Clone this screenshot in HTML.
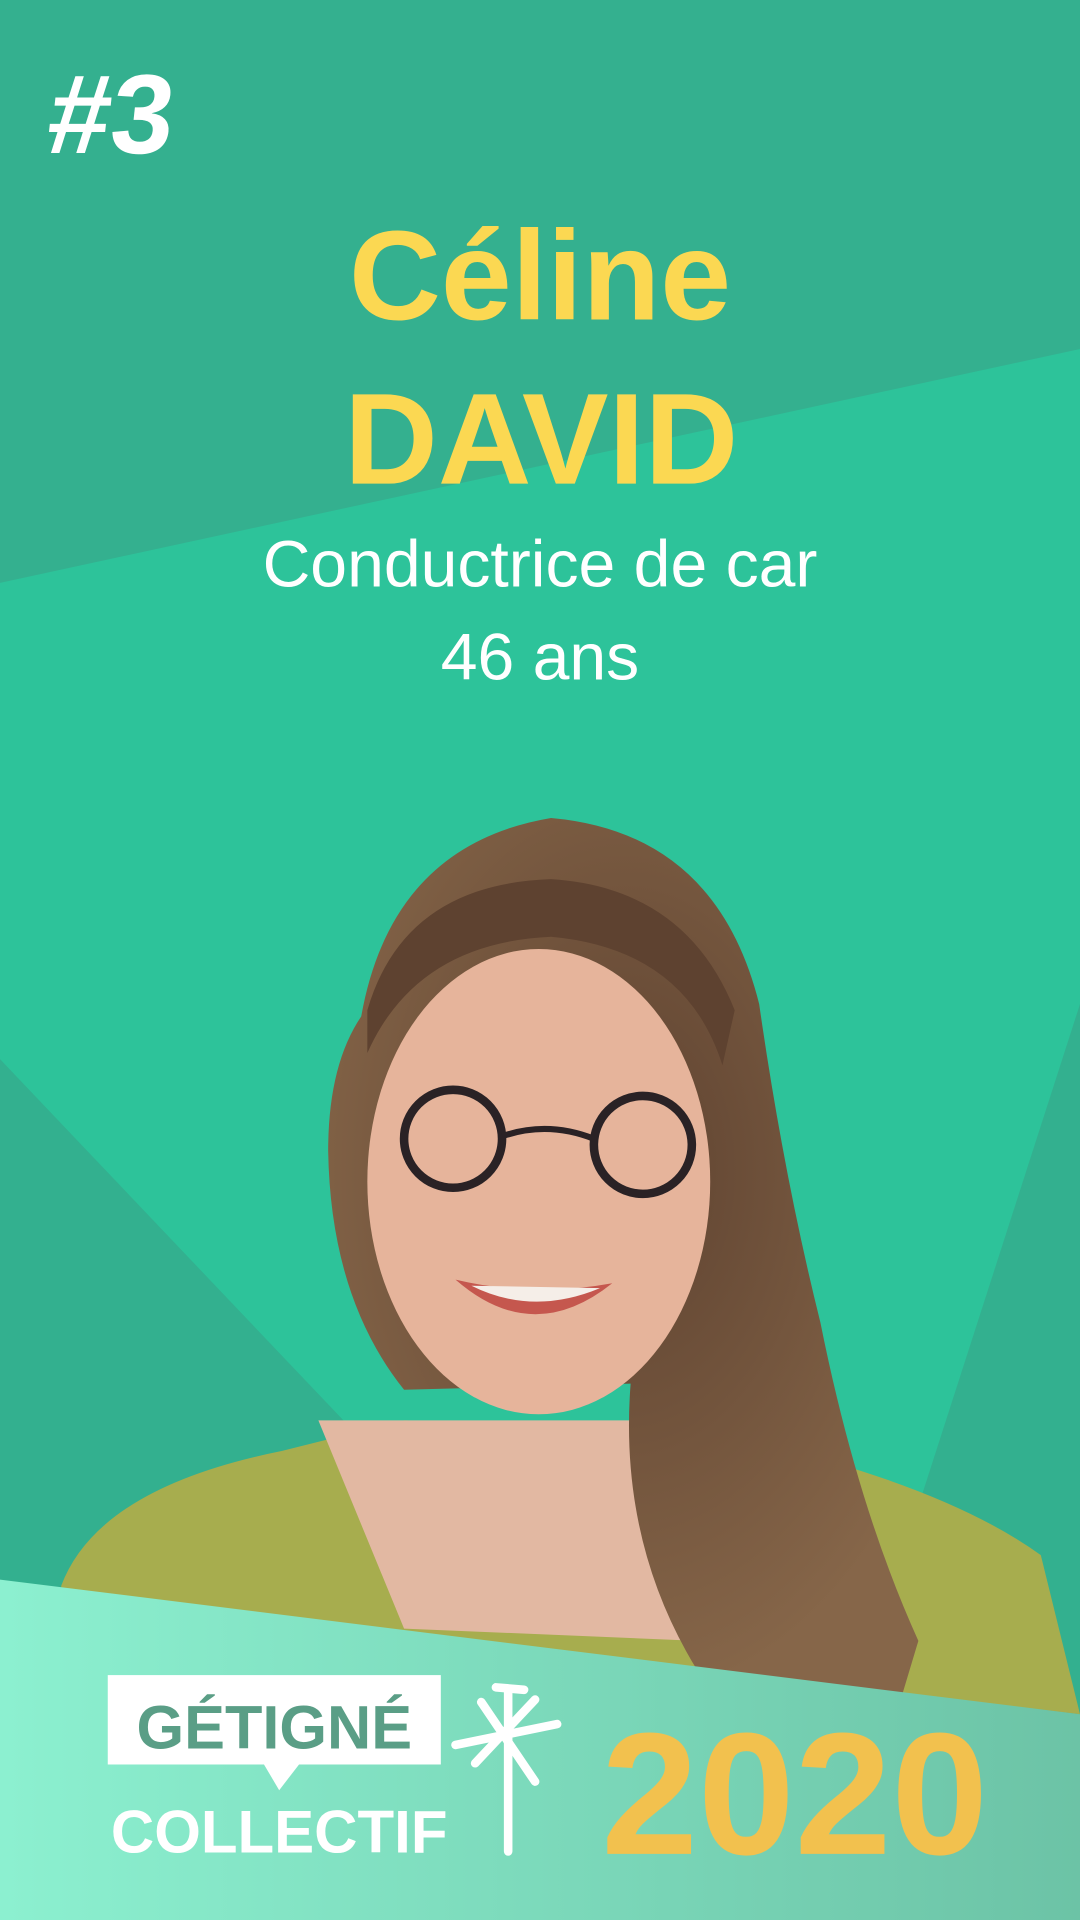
<!DOCTYPE html>
<html><head><meta charset="utf-8"><style>
html,body{margin:0;padding:0;width:1080px;height:1920px;overflow:hidden;background:#2dc39a}
svg{display:block}
</style></head><body>
<svg width="1080" height="1920" viewBox="0 0 882 1568" xmlns="http://www.w3.org/2000/svg">
<defs>
<linearGradient id="bg" x1="0" y1="0" x2="1" y2="0">
<stop offset="0" stop-color="#8cf0d0"/><stop offset="1" stop-color="#6cc3a6"/></linearGradient>
<radialGradient id="hair" cx="0.5" cy="0.4" r="0.6"><stop offset="0" stop-color="#5e4230"/><stop offset="1" stop-color="#866649"/></radialGradient>
</defs>
<rect width="882" height="1568" fill="#2dc39a"/>
<polygon points="0,0 882,0 882,285 0,476" fill="#34b08f"/>
<polygon points="0,865 290,1170 290,1310 0,1310" fill="#33b08f"/>
<polygon points="882,820 750,1230 750,1410 882,1410" fill="#33b08f"/>
<path d="M50,1295 Q80,1215 230,1185 L330,1160 L560,1165 Q760,1205 850,1270 L882,1400 L50,1300 Z" fill="#a7ad4e"/>
<path d="M260,1160 L540,1160 L570,1340 L330,1330 Z" fill="#e2b8a2"/>
<path d="M295,830 Q320,690 450,668 Q585,680 620,820 Q640,960 670,1080 Q700,1230 750,1340 L735,1390 L570,1365 Q505,1260 515,1130 L330,1135 Q270,1060 268,940 Q268,870 295,830 Z" fill="url(#hair)"/>
<ellipse cx="440" cy="965" rx="140" ry="190" fill="#e6b49b"/>
<path d="M300,860 Q340,770 450,765 Q560,775 590,870 L600,825 Q560,725 450,718 Q330,722 300,825 Z" fill="#5e4230"/>
<circle cx="370" cy="930" r="40" fill="none" stroke="#2a2225" stroke-width="7"/>
<circle cx="525" cy="935" r="40" fill="none" stroke="#2a2225" stroke-width="7"/>
<path d="M410,928 Q447,915 485,930" fill="none" stroke="#2a2225" stroke-width="5"/>
<path d="M372,1045 Q435,1100 500,1048 Q435,1060 372,1045 Z" fill="#c5574e"/>
<path d="M385,1050 Q435,1075 490,1052 Z" fill="#f5eee8"/>
<polygon points="0,1290 882,1400 882,1568 0,1568" fill="url(#bg)"/>
<text x="89" y="125" font-family="Liberation Sans, sans-serif" font-weight="bold" font-size="92" fill="#fff" text-anchor="middle" transform="skewX(-6) translate(12,0)">#3</text>
<text x="441" y="261" font-family="Liberation Sans, sans-serif" font-weight="bold" font-size="104" fill="#fbd852" text-anchor="middle">Céline</text>
<text x="442" y="395" font-family="Liberation Sans, sans-serif" font-weight="bold" font-size="106" fill="#fbd852" text-anchor="middle">DAVID</text>
<text x="441" y="479" font-family="Liberation Sans, sans-serif" font-size="54" fill="#fff" text-anchor="middle">Conductrice de car</text>
<text x="441" y="555" font-family="Liberation Sans, sans-serif" font-size="54" fill="#fff" text-anchor="middle">46 ans</text>
<rect x="88" y="1368" width="272" height="73" fill="#fff"/>
<polygon points="215,1440 245,1440 228,1462" fill="#fff"/>
<text x="224" y="1428" font-family="Liberation Sans, sans-serif" font-weight="bold" font-size="50" fill="#5a9e86" text-anchor="middle">GÉTIGNÉ</text>
<text x="228" y="1513" font-family="Liberation Sans, sans-serif" font-weight="bold" font-size="49" fill="#fff" text-anchor="middle">COLLECTIF</text>
<g stroke="#fff" stroke-width="7" stroke-linecap="round">
<line x1="415" y1="1380" x2="415" y2="1512"/>
<line x1="393" y1="1390" x2="437" y2="1455"/>
<line x1="437" y1="1388" x2="388" y2="1440"/>
<line x1="372" y1="1425" x2="455" y2="1408"/>
<line x1="405" y1="1378" x2="428" y2="1380"/>
</g>
<text x="649" y="1514" font-family="Liberation Sans, sans-serif" font-weight="bold" font-size="142" fill="#f2c14e" text-anchor="middle">2020</text>
</svg>
</body></html>
